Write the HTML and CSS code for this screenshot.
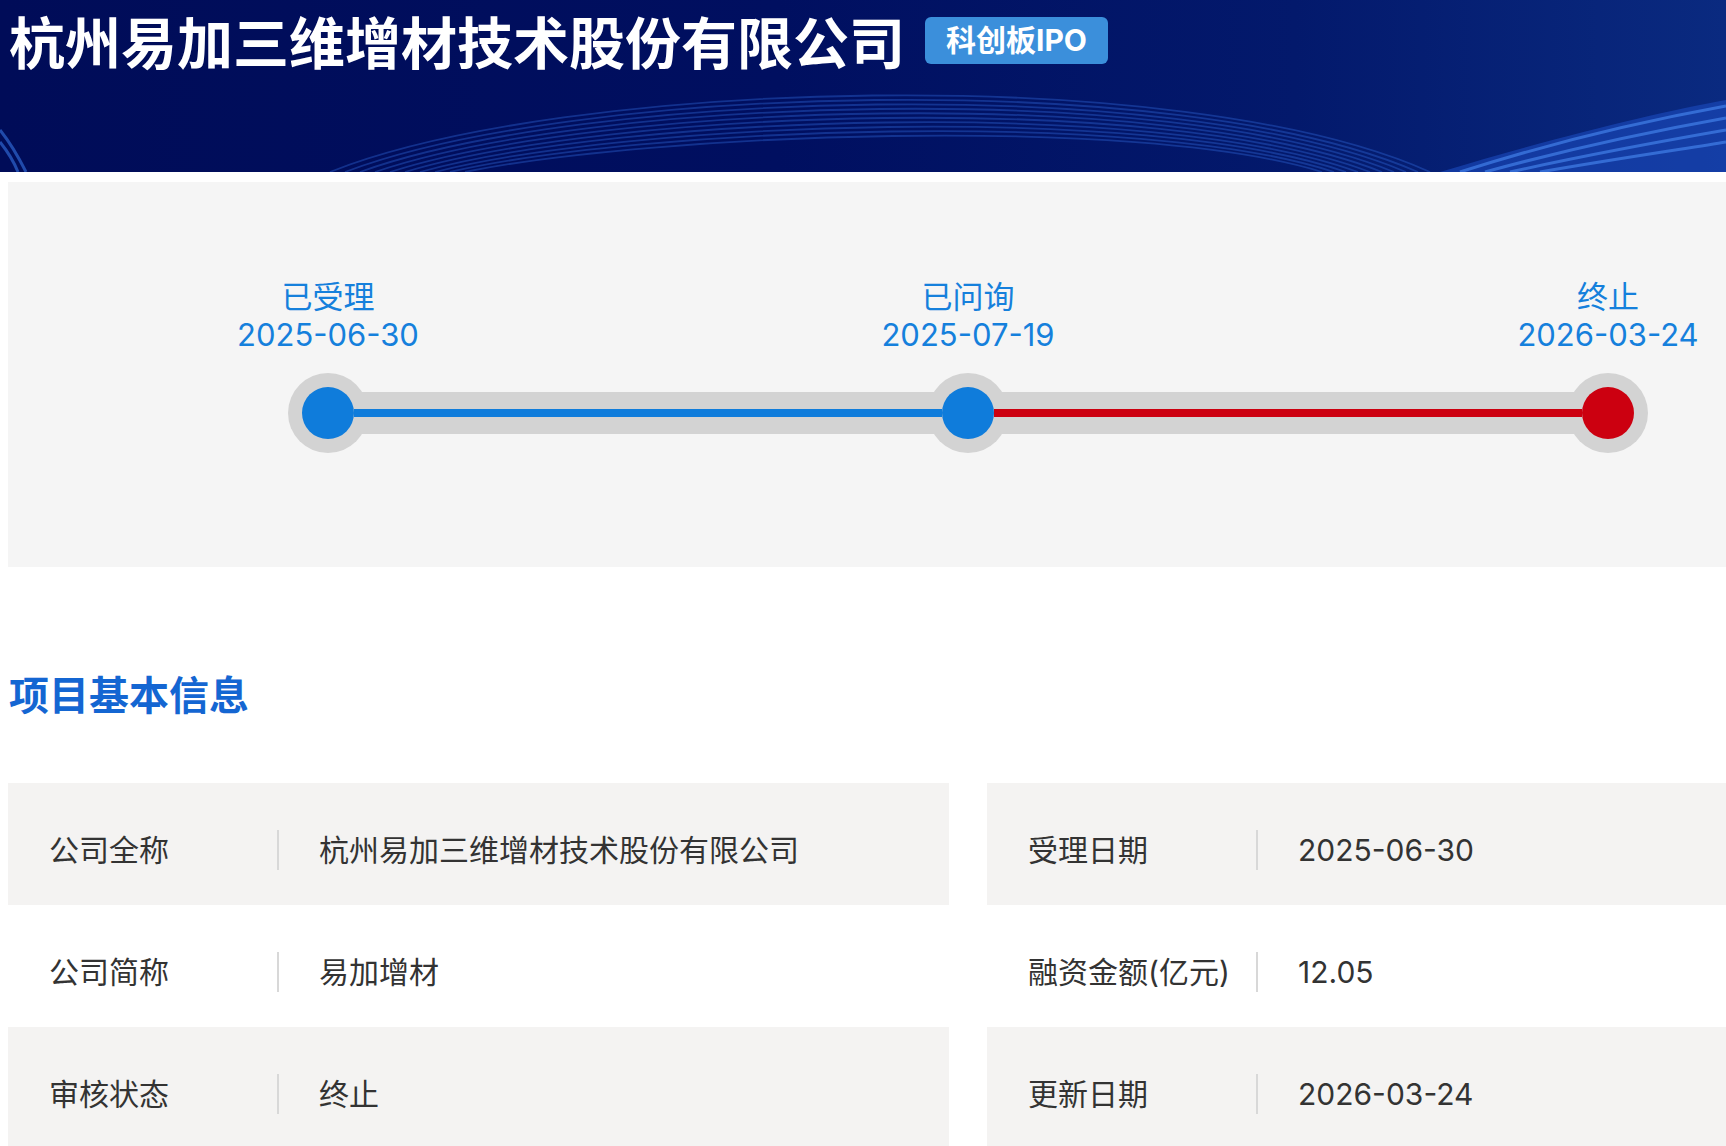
FILE: index.html
```html
<!DOCTYPE html>
<html lang="zh-CN">
<head>
	<meta charset="UTF-8">
	<title>杭州易加三维增材技术股份有限公司</title>
	<link rel="stylesheet" href="styles.css">
</head>
<body>
	<div class="header">
		<svg class="waves" width="1726" height="172" viewBox="0 0 1726 172">
			<g fill="none" stroke="#2f66d6" stroke-width="1.8" opacity="0.4">
				<path d="M330 172 C560 80 1180 60 1430 172"/>
				<path d="M345 172 C570 86 1175 66 1418 172"/>
				<path d="M360 172 C580 92 1170 72 1406 172"/>
				<path d="M375 172 C590 98 1165 78 1394 172"/>
				<path d="M390 172 C600 104 1160 84 1382 172"/>
				<path d="M405 172 C610 110 1155 90 1370 172"/>
				<path d="M420 172 C620 116 1150 96 1358 172"/>
				<path d="M435 172 C630 122 1145 102 1346 172"/>
				<path d="M450 172 C640 128 1140 108 1334 172"/>
				<path d="M465 172 C650 134 1135 114 1322 172"/>
			</g>
			<path d="M1440 172 C1560 136 1660 112 1726 100 L1726 172 Z" fill="#1d4fc4" opacity="0.55"/>
			<g fill="none" stroke="#4a8cf5" stroke-width="3" opacity="0.6">
				<path d="M1460 172 C1560 140 1660 118 1726 106"/>
				<path d="M1485 172 C1580 146 1670 128 1726 118"/>
				<path d="M1510 172 C1600 152 1680 138 1726 130"/>
				<path d="M1540 172 C1620 158 1690 148 1726 142"/>
			</g>
			<g fill="none" stroke="#3b7ef0" stroke-width="3" opacity="0.55">
				<path d="M0 130 C12 145 20 160 26 172"/>
				<path d="M0 142 C8 152 14 162 18 172"/>
			</g>
		</svg>
		<div class="head_bar">
			<h1 class="title">杭州易加三维增材技术股份有限公司</h1>
			<span class="badge">科创板IPO</span>
		</div>
	</div>

	<div class="progress">
		<div class="timeline">
			<div class="step">
				<div class="step_name">已受理</div>
				<div class="step_date">2025-06-30</div>
				<div class="node"><span class="dot blue"></span></div>
			</div>
			<div class="seg"><span class="line blue"></span></div>
			<div class="step">
				<div class="step_name">已问询</div>
				<div class="step_date">2025-07-19</div>
				<div class="node"><span class="dot blue"></span></div>
			</div>
			<div class="seg"><span class="line red"></span></div>
			<div class="step">
				<div class="step_name">终止</div>
				<div class="step_date">2026-03-24</div>
				<div class="node"><span class="dot red"></span></div>
			</div>
		</div>
	</div>

	<h2 class="sec_title">项目基本信息</h2>

	<div class="info">
		<div class="col">
			<div class="row">
				<span class="label">公司全称</span>
				<span class="value">杭州易加三维增材技术股份有限公司</span>
			</div>
			<div class="row">
				<span class="label">公司简称</span>
				<span class="value">易加增材</span>
			</div>
			<div class="row">
				<span class="label">审核状态</span>
				<span class="value">终止</span>
			</div>
		</div>
		<div class="col">
			<div class="row">
				<span class="label">受理日期</span>
				<span class="value">2025-06-30</span>
			</div>
			<div class="row">
				<span class="label">融资金额(亿元)</span>
				<span class="value">12.05</span>
			</div>
			<div class="row">
				<span class="label">更新日期</span>
				<span class="value">2026-03-24</span>
			</div>
		</div>
	</div>
</body>
</html>
```

FILE: styles.css
```css
body{
	margin:0;
	background:#fff;
	font-family:"Inter","Noto Sans CJK SC",sans-serif;
	overflow:hidden;
}
h1,h2{
	margin:0;
}

/* 顶部 */
.header{
	height:172px;
	position:relative;
	overflow:hidden;
	background:linear-gradient(90deg,#000c58 0%,#000f60 45%,#03196c 75%,#0a2a80 100%);
}
.header .waves{
	position:absolute;
	left:0;
	top:0;
}
.head_bar{
	position:relative;
	display:flex;
	align-items:center;
	padding:2px 0 0 9px;
}
.header .title{
	flex-shrink:0;
	white-space:nowrap;
	font:700 56px/76px "Noto Sans CJK SC",sans-serif;
	color:#fff;
}
.header .badge{
	flex-shrink:0;
	margin:0 0 0 20px;
	height:47px;
	padding:0 21px;
	border-radius:6px;
	background:#3b8fdb;
	color:#fff;
	white-space:nowrap;
	font:700 30px/47px "Inter","Noto Sans CJK SC",sans-serif;
}

/* 进度 */
.progress{
	margin:10px 0 0 8px;
	height:385px;
	box-sizing:border-box;
	padding:96px 0 0 280px;
	background:#f5f5f5;
}
.timeline{
	display:flex;
	align-items:flex-end;
}
.step{
	width:80px;
	display:flex;
	flex-direction:column;
	align-items:center;
}
.step_name,.step_date{
	white-space:nowrap;
	color:#1580dc;
	font-size:31px;
	line-height:38px;
}
.node{
	margin-top:19px;
	width:80px;
	height:80px;
	border-radius:50%;
	background:#d3d3d3;
	display:flex;
	justify-content:center;
	align-items:center;
}
.dot{
	position:relative;
	z-index:3;
	width:52px;
	height:52px;
	border-radius:50%;
}
.dot.blue{
	background:#0f7cdb;
}
.dot.red{
	background:#cc0010;
}
.seg{
	position:relative;
	z-index:2;
	width:588px;
	height:42px;
	margin:0 -14px 19px;
	background:#d3d3d3;
	display:flex;
	align-items:center;
}
.seg .line{
	display:block;
	width:100%;
	height:8px;
}
.line.blue{
	background:#0f7cdb;
}
.line.red{
	background:#cc0010;
}

/* 基本信息 */
.sec_title{
	margin:98px 0 0 9px;
	font:700 40px/56px "Noto Sans CJK SC",sans-serif;
	color:#1466d2;
}
.info{
	margin:62px 0 0 8px;
	display:grid;
	grid-template-columns:941px 1fr;
	column-gap:38px;
}
.row{
	height:122px;
	box-sizing:border-box;
	padding-top:12px;
	display:flex;
	align-items:center;
	font-size:30px;
	color:#333;
}
.row:nth-child(odd){
	background:#f4f3f2;
}
.row .label{
	width:228px;
	padding-left:41px;
	height:40px;
	line-height:40px;
	border-right:2px solid #d8d8d8;
	white-space:nowrap;
}
.row .value{
	padding-left:40px;
	line-height:40px;
}
```
